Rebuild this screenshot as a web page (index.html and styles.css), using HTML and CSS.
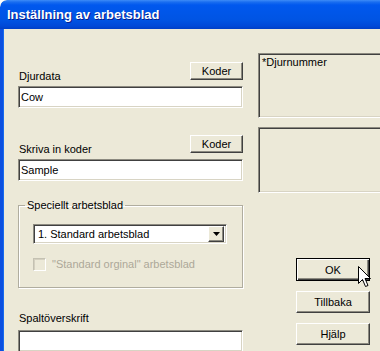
FILE: index.html
```html
<!DOCTYPE html>
<html lang="sv">
<head>
    <meta charset="UTF-8">
    <title>Inställning av arbetsblad</title>
    <link rel="stylesheet" href="styles.css">
</head>
<body>
    <div class="window">
        <div class="titlebar">
            <span class="title">Inställning av arbetsblad</span>
        </div>

        <div class="client">
            <!-- Left column: fields -->
            <div class="left">
                <div class="field">
                    <div class="field-head">
                        <label for="djurdata">Djurdata</label>
                        <button class="btn koder">Koder</button>
                    </div>
                    <input class="edit" id="djurdata" type="text" value="Cow">
                </div>

                <div class="field second">
                    <div class="field-head">
                        <label for="koder">Skriva in koder</label>
                        <button class="btn koder">Koder</button>
                    </div>
                    <input class="edit" id="koder" type="text" value="Sample">
                </div>

                <fieldset class="group">
                    <legend>Speciellt arbetsblad</legend>
                    <div class="combo">
                        <span class="combo-text">1. Standard arbetsblad</span>
                        <span class="combo-btn">
                            <svg width="7" height="4" viewBox="0 0 7 4"><path d="M0 0h7L3.5 4z" fill="#000"/></svg>
                        </span>
                    </div>
                    <label class="check disabled">
                        <span class="check-box"></span>
                        <span>"Standard orginal" arbetsblad</span>
                    </label>
                </fieldset>

                <div class="field last">
                    <label for="spalt">Spaltöverskrift</label>
                    <input class="edit" id="spalt" type="text" value="">
                </div>
            </div>

            <!-- Right column: lists and actions -->
            <div class="right">
                <div class="listbox"><span>*Djurnummer</span></div>
                <div class="listbox second"></div>
                <div class="actions">
                    <button class="btn default">OK</button>
                    <button class="btn">Tillbaka</button>
                    <button class="btn">Hjälp</button>
                </div>
            </div>
        </div>

        <svg class="cursor" width="14" height="22" viewBox="0 0 14 22">
            <path d="M0.5 0.5V17.5L4.5 13.5L7.5 20.5L10 19.5L7 12.5H12.5Z" fill="#fff" stroke="#000" stroke-width="1"/>
        </svg>
    </div>
</body>
</html>
```

FILE: styles.css
```css
html, body {
    margin: 0;
    padding: 0;
    background-color: #fff;
}
body {
    font-family: "Liberation Sans", Arial, sans-serif;
    font-size: 11px;
    color: #000;
}
.window {
    position: relative;
    width: 380px;
    height: 351px;
    overflow: hidden;
    background-color: #ece9d8;
    border-top-left-radius: 7px;
}
.titlebar {
    height: 29px;
    display: flex;
    align-items: center;
    padding-left: 7px;
    padding-bottom: 1px;
    box-sizing: border-box;
    background: linear-gradient(to bottom, #3d8cf7 0, #1a6ef0 2px, #0058ee 5px, #0054e3 20px, #0049d8 26px, #003fc6 29px);
    border-top-left-radius: 7px;
}
.title {
    font-weight: bold;
    font-size: 13px;
    color: #fff;
    text-shadow: 1px 1px 0 #0a1e8a;
}
.client {
    display: flex;
    gap: 15px;
    height: 322px;
    padding-left: 15px;
    border-left: 3px solid #0b4fe0;
    box-shadow: inset 1px 0 0 #166aee;
}
.left {
    width: 225px;
    padding-top: 33px;
}
.field-head {
    display: flex;
    justify-content: space-between;
    align-items: flex-end;
}
label {
    line-height: 13px;
    padding-left: 1px;
}
.field.second {
    margin-top: 27px;
}
.field.last {
    margin-top: 24px;
}
.field.last label {
    display: block;
}
.edit {
    display: block;
    box-sizing: border-box;
    width: 225px;
    height: 22px;
    margin: 3px 0 0;
    padding: 0 2px;
    font-family: inherit;
    font-size: 11px;
    color: #000;
    background-color: #fff;
    border: 1px solid;
    border-color: #8c8a80 #fff #fff #8c8a80;
    box-shadow: inset 1px 1px 0 #404040, inset -1px -1px 0 #d8d4c4;
    outline: none;
}
.field.last .edit {
    margin-top: 5px;
}
.btn {
    box-sizing: border-box;
    font-family: inherit;
    font-size: 11px;
    color: #000;
    background-color: #ece9d8;
    border: 1px solid;
    border-color: #fff #404040 #404040 #fff;
    box-shadow: inset -1px -1px 0 #8c8a80;
    padding: 0;
    cursor: pointer;
}
.btn.koder {
    width: 53px;
    height: 18px;
    margin-bottom: 3px;
}
.group {
    box-sizing: border-box;
    width: 225px;
    margin: 18px 0 0;
    padding: 12px 14px 16px 14px;
    border: 1px solid #b0ad9f;
    box-shadow: inset 1px 1px 0 #fff, 1px 1px 0 #fff;
    border-radius: 0;
}
.group legend {
    padding: 0 2px;
    margin-left: -8px;
    line-height: 13px;
}
.combo {
    box-sizing: border-box;
    width: 194px;
    height: 20px;
    display: flex;
    align-items: center;
    justify-content: space-between;
    background-color: #fff;
    border: 1px solid;
    border-color: #8c8a80 #fff #fff #8c8a80;
    box-shadow: inset 1px 1px 0 #404040, inset -1px -1px 0 #d8d4c4;
    padding: 0 2px 0 4px;
}
.combo-btn {
    box-sizing: border-box;
    width: 16px;
    height: 16px;
    display: flex;
    align-items: center;
    justify-content: center;
    background-color: #ece9d8;
    border: 1px solid;
    border-color: #fff #404040 #404040 #fff;
    box-shadow: inset -1px -1px 0 #8c8a80;
}
.check {
    display: flex;
    align-items: center;
    gap: 6px;
    margin-top: 14px;
    padding-left: 0;
}
.check-box {
    box-sizing: border-box;
    width: 13px;
    height: 13px;
    border: 1px solid;
    border-color: #c4c1b2 #fff #fff #c4c1b2;
    box-shadow: inset 1px 1px 0 #d4d0c0;
}
.check.disabled {
    color: #aca899;
}
.right {
    display: flex;
    flex-direction: column;
    padding-top: 24px;
}
.listbox {
    box-sizing: border-box;
    width: 140px;
    height: 65px;
    padding: 2px 3px;
    line-height: 13px;
    border: 1px solid;
    border-color: #8c8a80 #fff #fff #8c8a80;
    box-shadow: inset 1px 1px 0 #404040, inset -1px -1px 0 #d8d4c4;
}
.listbox.second {
    margin-top: 9px;
    height: 66px;
}
.actions {
    display: flex;
    flex-direction: column;
    gap: 10px;
    margin-top: 65px;
    margin-left: 38px;
}
.actions .btn {
    width: 74px;
    height: 22px;
}
.actions .btn.default {
    height: 23px;
    border: 1px solid #000;
    box-shadow: inset 1px 1px 0 #fff, inset -1px -1px 0 #404040, inset -2px -2px 0 #8c8a80;
}
.cursor {
    position: absolute;
    left: 358px;
    top: 266px;
}
```
